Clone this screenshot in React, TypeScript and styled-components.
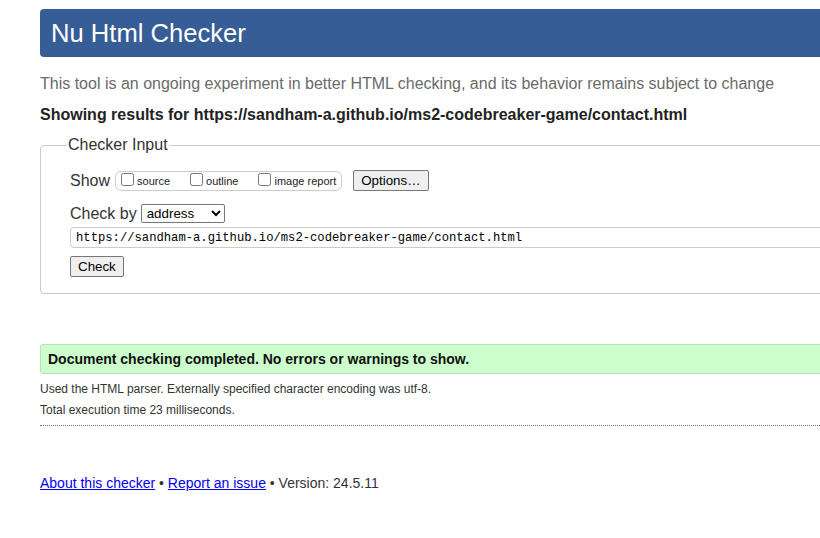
import styled, { createGlobalStyle } from "styled-components";

const GlobalStyle = createGlobalStyle`
  html, body {
    margin: 0;
    padding: 0;
    background: #fff;
    overflow: hidden;
  }
  body {
    font-family: "Liberation Sans", Arial, sans-serif;
    color: #222;
  }
`;

const Page = styled.div`
  width: 1100px;
  padding: 9px 0 0 40px;
`;

const Header = styled.h1`
  margin: 0;
  height: 48px;
  padding: 0 11px;
  display: flex;
  align-items: center;
  background: #365d95;
  border-radius: 4px;
  color: #fff;
  font-size: 25.6px;
  font-weight: normal;
`;

const Intro = styled.p`
  margin: 17px 0 0;
  color: #6a6a6a;
  font-size: 16px;
  line-height: 20px;
`;

const Results = styled.h2`
  margin: 11px 0 0;
  font-size: 16px;
  line-height: 20px;
  font-weight: bold;
  color: #222;
`;

const Fieldset = styled.fieldset`
  margin: 11px 0 0;
  padding: 16px 29px 16px;
  border: 1px solid #ccc;
  border-radius: 4px;
`;

const Legend = styled.legend`
  margin-left: -3px;
  padding: 0 1px;
  font-size: 16px;
  color: #333;
`;

const Row = styled.div<{ $top?: number }>`
  display: flex;
  align-items: center;
  gap: 4px;
  margin-top: ${(p) => p.$top ?? 0}px;
  font-size: 16px;
  color: #333;
`;

const CheckGroup = styled.div`
  display: flex;
  align-items: center;
  height: 18px;
  margin-left: 1px;
  padding: 0 5px;
  border: 1px solid #ccc;
  border-radius: 6px;
`;

const CheckLabel = styled.label<{ $gap?: number }>`
  display: flex;
  align-items: center;
  margin-right: ${(p) => p.$gap ?? 0}px;
  font-size: 11px;
  color: #222;
  input {
    width: 13px;
    height: 13px;
    margin: 0 3px 2px 0;
  }
`;

const Button = styled.button<{ $left?: number }>`
  height: 21px;
  margin-left: ${(p) => p.$left ?? 0}px;
  padding: 1px 7px;
  font-family: "Liberation Sans", Arial, sans-serif;
  font-size: 13.33px;
  color: #000;
  background: #efefef;
  border: 1px solid #767676;
  border-radius: 2px;
`;

const Select = styled.select`
  width: 84px;
  height: 19px;
  padding: 0 0 0 1px;
  font-family: "Liberation Sans", Arial, sans-serif;
  font-size: 13.33px;
  color: #000;
  background: #fff;
  border: 1px solid #767676;
  border-radius: 2px;
`;

const UrlInput = styled.input`
  box-sizing: border-box;
  width: 100%;
  height: 21px;
  padding: 0 5px;
  font-family: "Liberation Mono", "DejaVu Sans Mono", monospace;
  font-size: 12.2px;
  color: #000;
  border: 1px solid #ccc;
  border-radius: 4px;
`;

const Success = styled.div`
  margin-top: 50px;
  height: 28px;
  display: flex;
  align-items: center;
  padding: 0 7px;
  background: #ccffcc;
  border: 1px solid #b8e0b8;
  border-radius: 3px;
  font-size: 14px;
  font-weight: bold;
  color: #111;
`;

const Note = styled.p<{ $top: number }>`
  margin: ${(p) => p.$top}px 0 0;
  font-size: 12px;
  line-height: 14px;
  color: #333;
`;

const Rule = styled.hr`
  margin: 8px 0 0;
  border: 0;
  border-top: 1px dotted #777;
`;

const Footer = styled.p`
  margin: 49px 0 0;
  font-size: 14px;
  line-height: 16px;
  color: #333;
  a {
    color: #0000ee;
    text-decoration: underline;
  }
`;

const App = () => {
  return (
    <>
      <GlobalStyle />
      <Page>
        <Header>Nu Html Checker</Header>
        <Intro>
          This tool is an ongoing experiment in better HTML checking, and its behavior remains subject to change
        </Intro>
        <Results>Showing results for https://sandham-a.github.io/ms2-codebreaker-game/contact.html</Results>
        <Fieldset>
          <Legend>Checker Input</Legend>
          <Row>
            Show
            <CheckGroup>
              <CheckLabel $gap={20}>
                <input type="checkbox" />
                source
              </CheckLabel>
              <CheckLabel $gap={20}>
                <input type="checkbox" />
                outline
              </CheckLabel>
              <CheckLabel>
                <input type="checkbox" />
                image report
              </CheckLabel>
            </CheckGroup>
            <Button $left={7}>Options…</Button>
          </Row>
          <Row $top={13}>
            Check by
            <Select defaultValue="address">
              <option value="address">address</option>
              <option value="file">file upload</option>
              <option value="text">text input</option>
            </Select>
          </Row>
          <Row $top={4}>
            <UrlInput readOnly value="https://sandham-a.github.io/ms2-codebreaker-game/contact.html" />
          </Row>
          <Row $top={8}>
            <Button>Check</Button>
          </Row>
        </Fieldset>
        <Success>Document checking completed. No errors or warnings to show.</Success>
        <Note $top={8}>Used the HTML parser. Externally specified character encoding was utf-8.</Note>
        <Note $top={7}>Total execution time 23 milliseconds.</Note>
        <Rule />
        <Footer>
          <a href="#about">About this checker</a> • <a href="#issue">Report an issue</a> • Version: 24.5.11
        </Footer>
      </Page>
    </>
  );
};

export default App;
